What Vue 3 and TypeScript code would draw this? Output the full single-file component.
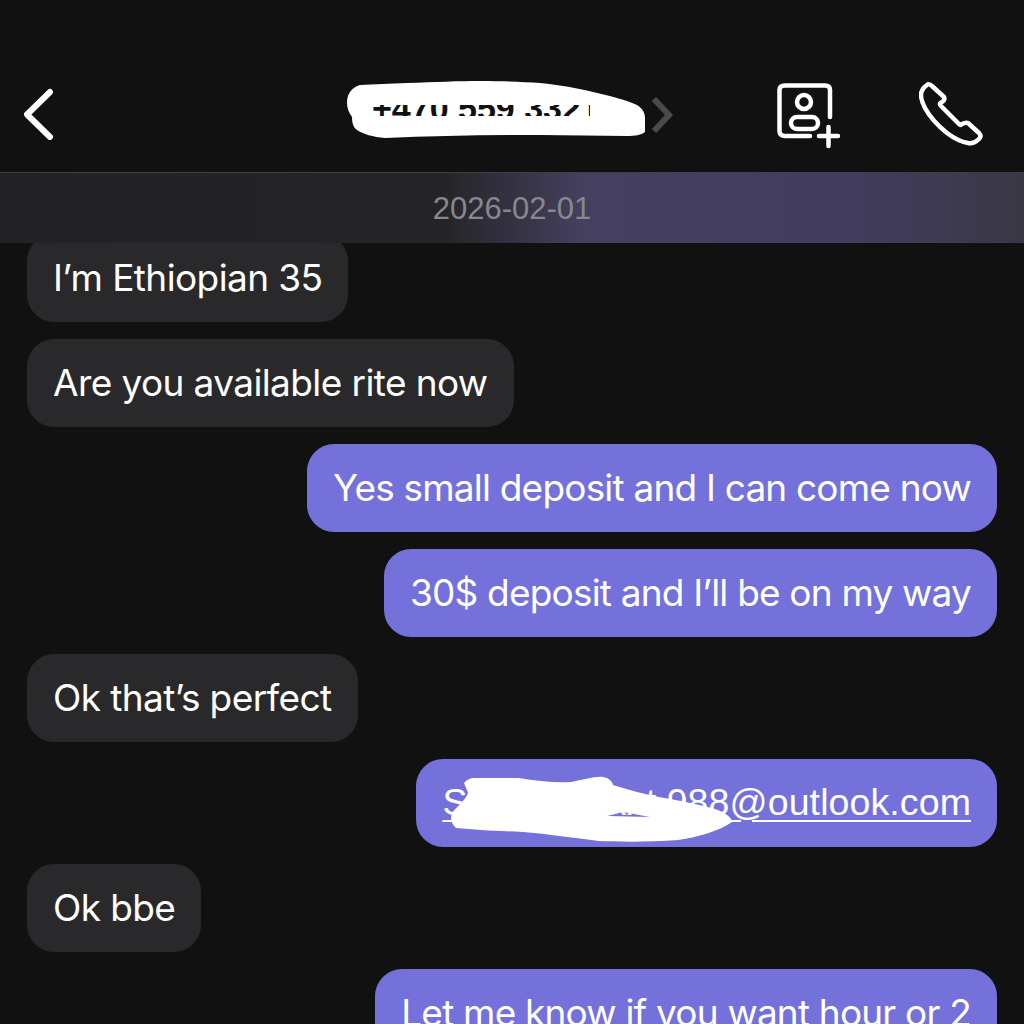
<script setup lang="ts">
interface Message {
  id: number
  text: string
  mine: boolean
  link?: boolean
}

const messages: Message[] = [
  { id: 1, text: 'I’m Ethiopian 35', mine: false },
  { id: 2, text: 'Are you available rite now', mine: false },
  { id: 3, text: 'Yes small deposit and I can come now', mine: true },
  { id: 4, text: '30$ deposit and I’ll be on my way', mine: true },
  { id: 5, text: 'Ok that’s perfect', mine: false },
  { id: 6, text: 'Slxxxxxxxxxt.988@outlook.com', mine: true, link: true },
  { id: 7, text: 'Ok bbe', mine: false },
  { id: 8, text: 'Let me know if you want hour or 2', mine: true },
]
</script>

<template>
  <div class="chat">
    <header class="top">
      <svg class="back" width="34" height="52" viewBox="0 0 34 52" fill="none">
        <path d="M29 4 L6 26.5 L29 49" stroke="#fff" stroke-width="6" stroke-linecap="round" stroke-linejoin="round" />
      </svg>

      <div class="who">
        <svg class="scribble" width="304" height="60" viewBox="0 0 304 60">
          <path fill="#fff" d="M15 4 C30 3 45 3 62 2 C90 1 115 0 135 0 C160 0 178 1 195 2 C215 4 232 7 248 11 C265 15 282 19 292 24 C298 28 300 32 300 37 L300 51 C296 54 290 55 282 55 L195 54 C140 54 90 55 40 57 C28 56 18 53 12 49 C8 46 7 41 7 36 C4 32 2 27 2 22 C2 17 3 14 5 11 C8 7 11 5 15 4 Z" />
        </svg>
        <div class="number-clip"><span class="number">+470 559 3321</span></div>
        <svg class="chev" width="24" height="38" viewBox="0 0 24 38" fill="none">
          <path d="M4 3 L19 19 L4 35" stroke="#4a4a4c" stroke-width="6" />
        </svg>
      </div>

      <svg class="add" width="66" height="66" viewBox="0 0 66 66" fill="none" stroke="#fff" stroke-width="4.5" stroke-linecap="round">
        <path d="M53 37 V10 Q53 5.5 48 5.5 H8 Q2.5 5.5 2.5 10 V51 Q2.5 56 8 56 H33" />
        <circle cx="27" cy="22" r="7" />
        <rect x="14" y="37" width="27" height="12" rx="6" />
        <path d="M51.5 47 V66 M42 56 H61" />
      </svg>

      <svg class="call" width="66" height="66" viewBox="0 0 66 66" fill="none">
        <path d="M8 5 C5 7 3 9 2.5 12 C1 16 2 20 6 28 C12 39 18 45 28 53 C36 59 43 62 49 63 C53 64 57 62 60 59 C62 57 62 55 60 53 L49 43 C47 42 45 43 43 44 C42 45 41 45 40 44 L22 26 C20 24 21 23 23 22 C25 21 26 19 25 17 L13 6 C11 4 9 4 8 5 Z" stroke="#fff" stroke-width="4.5" stroke-linejoin="round" />
      </svg>
    </header>

    <div class="datebar">2026-02-01</div>

    <main class="list">
      <div
        v-for="m in messages"
        :key="m.id"
        class="bubble"
        :class="{ mine: m.mine, link: m.link }"
      >
        {{ m.text }}
        <svg v-if="m.link" class="scribble-mail" width="290" height="68" viewBox="0 0 290 68">
          <path fill="#fff" fill-rule="evenodd" d="M29 3 L74 3 C92 6 110 8 126 7 C138 5 150 1 158 2 C164 3 167 6 168 10 C184 15 198 19 214 22 C236 26 258 30 273 35 C282 39 287 43 287 47 C274 56 254 62 233 65 C206 67 178 67 154 66 C128 63 104 59 78 57 C54 56 30 55 11 53 C6 48 5 43 7 38 C11 32 20 26 23 18 C22 14 20 11 19 8 C21 5 25 3 29 3 Z M162 41 L178 37 L205 42 Z" />
        </svg>
      </div>
    </main>
  </div>
</template>

<style>
html, body { background: #111112; }
</style>

<style scoped>
.chat {
  height: 1024px;
  overflow: hidden;
  background: #111112;
  font-family: Inter, "Noto Sans", sans-serif;
  color: #fff;
}

.top {
  height: 172px;
  position: relative;
  z-index: 2;
  display: flex;
  align-items: flex-end;
  padding: 0 38px 26px 21px;
  box-sizing: border-box;
  background: #111112;
}
.back { margin-bottom: 6px; }
.who {
  position: relative;
  width: 326px;
  height: 60px;
  margin: 0 105px 5px 290px;
}
.number-clip {
  position: absolute;
  left: 27px;
  top: 24px;
  width: 218px;
  height: 11px;
  overflow: hidden;
  color: #111112;
  font-family: "Liberation Sans", sans-serif;
  font-size: 34px;
  font-weight: 700;
  line-height: 34px;
  white-space: nowrap;
}
.number { display: block; margin-top: -14px; }
.scribble { position: absolute; left: 0; top: 0; }
.chev { position: absolute; right: -3px; top: 15px; }
.add { margin-left: 1px; overflow: visible; }
.call { margin-left: 76px; }

.datebar {
  height: 71px;
  position: relative;
  z-index: 2;
  box-sizing: border-box;
  border-top: 1px solid #3f3f42;
  padding-top: 2px;
  display: flex;
  align-items: center;
  justify-content: center;
  font-family: "Liberation Sans", sans-serif;
  font-size: 31px;
  color: #88878c;
  background: linear-gradient(90deg, #232325 0%, #242426 43%, #45405f 57%, #433d60 82%, #3a3745 100%);
}

.list {
  display: flex;
  flex-direction: column;
  align-items: flex-start;
  gap: 17px;
  margin-top: -9px;
  padding: 0 27px;
}
.bubble {
  position: relative;
  height: 88px;
  flex: none;
  box-sizing: border-box;
  display: flex;
  align-items: center;
  padding: 0 26px 2px;
  border-radius: 27px;
  background: #29292c;
  font-size: 37px;
  letter-spacing: -0.6px;
  white-space: nowrap;
}
.bubble.mine { align-self: flex-end; background: #7471db; letter-spacing: -0.8px; }
.bubble.link {
  text-decoration: underline;
  text-underline-offset: 5px;
  text-decoration-thickness: 2px;
  font-family: "Liberation Sans", sans-serif;
  font-size: 37.5px;
  letter-spacing: 0.1px;
}
.scribble-mail { position: absolute; left: 29px; top: 16px; }
</style>
